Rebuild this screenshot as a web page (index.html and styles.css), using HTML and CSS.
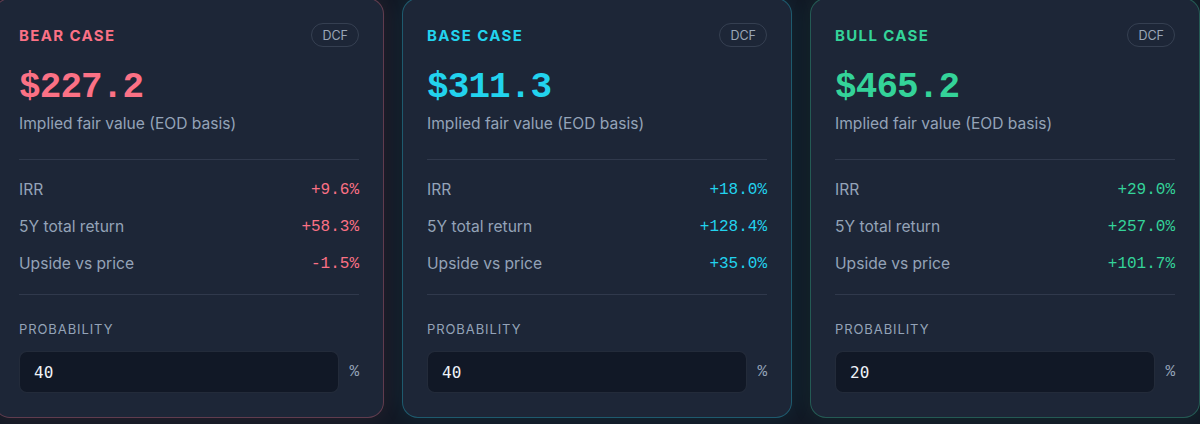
FILE: index.html
```html
<!DOCTYPE html>
<html lang="en">
<head>
<meta charset="utf-8">
<title>Valuation scenarios</title>
<link rel="stylesheet" href="styles.css">
</head>
<body>
<main class="scenarios">
  <section class="card card--bear">
    <header class="card-head">
      <h3 class="case-title">BEAR CASE</h3>
      <span class="badge">DCF</span>
    </header>
    <div class="fair-value">$227.2</div>
    <p class="fair-label">Implied fair value (EOD basis)</p>
    <dl class="metrics">
      <div class="metric"><dt>IRR</dt><dd>+9.6%</dd></div>
      <div class="metric"><dt>5Y total return</dt><dd>+58.3%</dd></div>
      <div class="metric"><dt>Upside vs price</dt><dd>-1.5%</dd></div>
    </dl>
    <div class="prob">
      <label class="prob-label" for="p-bear">PROBABILITY</label>
      <div class="prob-row">
        <input class="prob-input" id="p-bear" type="text" value="40">
        <span class="prob-unit">%</span>
      </div>
    </div>
  </section>

  <section class="card card--base">
    <header class="card-head">
      <h3 class="case-title">BASE CASE</h3>
      <span class="badge">DCF</span>
    </header>
    <div class="fair-value">$311.3</div>
    <p class="fair-label">Implied fair value (EOD basis)</p>
    <dl class="metrics">
      <div class="metric"><dt>IRR</dt><dd>+18.0%</dd></div>
      <div class="metric"><dt>5Y total return</dt><dd>+128.4%</dd></div>
      <div class="metric"><dt>Upside vs price</dt><dd>+35.0%</dd></div>
    </dl>
    <div class="prob">
      <label class="prob-label" for="p-base">PROBABILITY</label>
      <div class="prob-row">
        <input class="prob-input" id="p-base" type="text" value="40">
        <span class="prob-unit">%</span>
      </div>
    </div>
  </section>

  <section class="card card--bull">
    <header class="card-head">
      <h3 class="case-title">BULL CASE</h3>
      <span class="badge">DCF</span>
    </header>
    <div class="fair-value">$465.2</div>
    <p class="fair-label">Implied fair value (EOD basis)</p>
    <dl class="metrics">
      <div class="metric"><dt>IRR</dt><dd>+29.0%</dd></div>
      <div class="metric"><dt>5Y total return</dt><dd>+257.0%</dd></div>
      <div class="metric"><dt>Upside vs price</dt><dd>+101.7%</dd></div>
    </dl>
    <div class="prob">
      <label class="prob-label" for="p-bull">PROBABILITY</label>
      <div class="prob-row">
        <input class="prob-input" id="p-bull" type="text" value="20">
        <span class="prob-unit">%</span>
      </div>
    </div>
  </section>
</main>
</body>
</html>
```

FILE: styles.css
```css
* {
  box-sizing: border-box;
}

html,
body {
  margin: 0;
  height: 100%;
  background: #121925;
  overflow: hidden;
}

body {
  font-family: Inter, "Noto Sans", "Liberation Sans", sans-serif;
  color: #e2e8f0;
}

.scenarios {
  display: grid;
  grid-template-columns: repeat(3, 390px);
  column-gap: 18px;
  margin: -2px 0 0 -6px;
}

/* scenario card */
.card {
  --accent: #fb7185;
  --edge: rgba(251, 113, 133, 0.30);
  --glow: rgba(251, 113, 133, 0.09);
  display: flex;
  flex-direction: column;
  padding: 24px;
  background: #1d2637;
  border: 1px solid var(--edge);
  border-radius: 16px;
  box-shadow: 0 0 22px var(--glow);
}

.card--base {
  --accent: #22d3ee;
  --edge: rgba(34, 211, 238, 0.30);
  --glow: rgba(34, 211, 238, 0.08);
}

.card--bull {
  --accent: #34d399;
  --edge: rgba(52, 211, 153, 0.30);
  --glow: rgba(52, 211, 153, 0.08);
}

.card-head {
  display: flex;
  align-items: center;
  justify-content: space-between;
  height: 24px;
}

.case-title {
  margin: 0;
  font-size: 15px;
  font-weight: 700;
  letter-spacing: 0.09em;
  color: var(--accent);
}

.badge {
  display: inline-flex;
  align-items: center;
  height: 24px;
  padding: 0 10px;
  border: 1px solid rgba(148, 163, 184, 0.2);
  border-radius: 999px;
  font-size: 12.5px;
  color: #9aa6b8;
}

.fair-value {
  margin-top: 21px;
  font-family: "Liberation Mono", "DejaVu Sans Mono", monospace;
  font-size: 36px;
  line-height: 40px;
  font-weight: 700;
  letter-spacing: -0.025em;
  color: var(--accent);
}

.fair-label {
  margin: 6px 0 0;
  font-size: 15.6px;
  line-height: 20px;
  color: #94a3b8;
}

/* return metrics */
.metrics {
  display: flex;
  flex-direction: column;
  gap: 15px;
  margin: 25px 0 0;
  padding: 19px 0 19px;
  border-top: 1px solid rgba(148, 163, 184, 0.16);
  border-bottom: 1px solid rgba(148, 163, 184, 0.16);
}

.metric {
  display: flex;
  justify-content: space-between;
  align-items: center;
  line-height: 22px;
}

.metric dt {
  font-size: 15.6px;
  color: #94a3b8;
}

.metric dd {
  margin: 0;
  font-family: "Liberation Mono", "DejaVu Sans Mono", monospace;
  font-size: 16px;
  color: var(--accent);
}

/* probability input */
.prob {
  padding-top: 24px;
}

.prob-label {
  display: block;
  font-size: 13px;
  line-height: 20px;
  letter-spacing: 0.07em;
  color: #94a3b8;
}

.prob-row {
  display: flex;
  align-items: center;
  gap: 10px;
  margin-top: 12px;
}

.prob-input {
  flex: 1;
  min-width: 0;
  height: 42px;
  padding: 0 14px;
  background: #111826;
  border: 1px solid rgba(148, 163, 184, 0.14);
  border-radius: 8px;
  font-family: "DejaVu Sans Mono", monospace;
  font-size: 16px;
  color: #eef2f7;
  outline: none;
}

.prob-unit {
  font-family: "Liberation Mono", "DejaVu Sans Mono", monospace;
  font-size: 16px;
  color: #94a3b8;
}
```
